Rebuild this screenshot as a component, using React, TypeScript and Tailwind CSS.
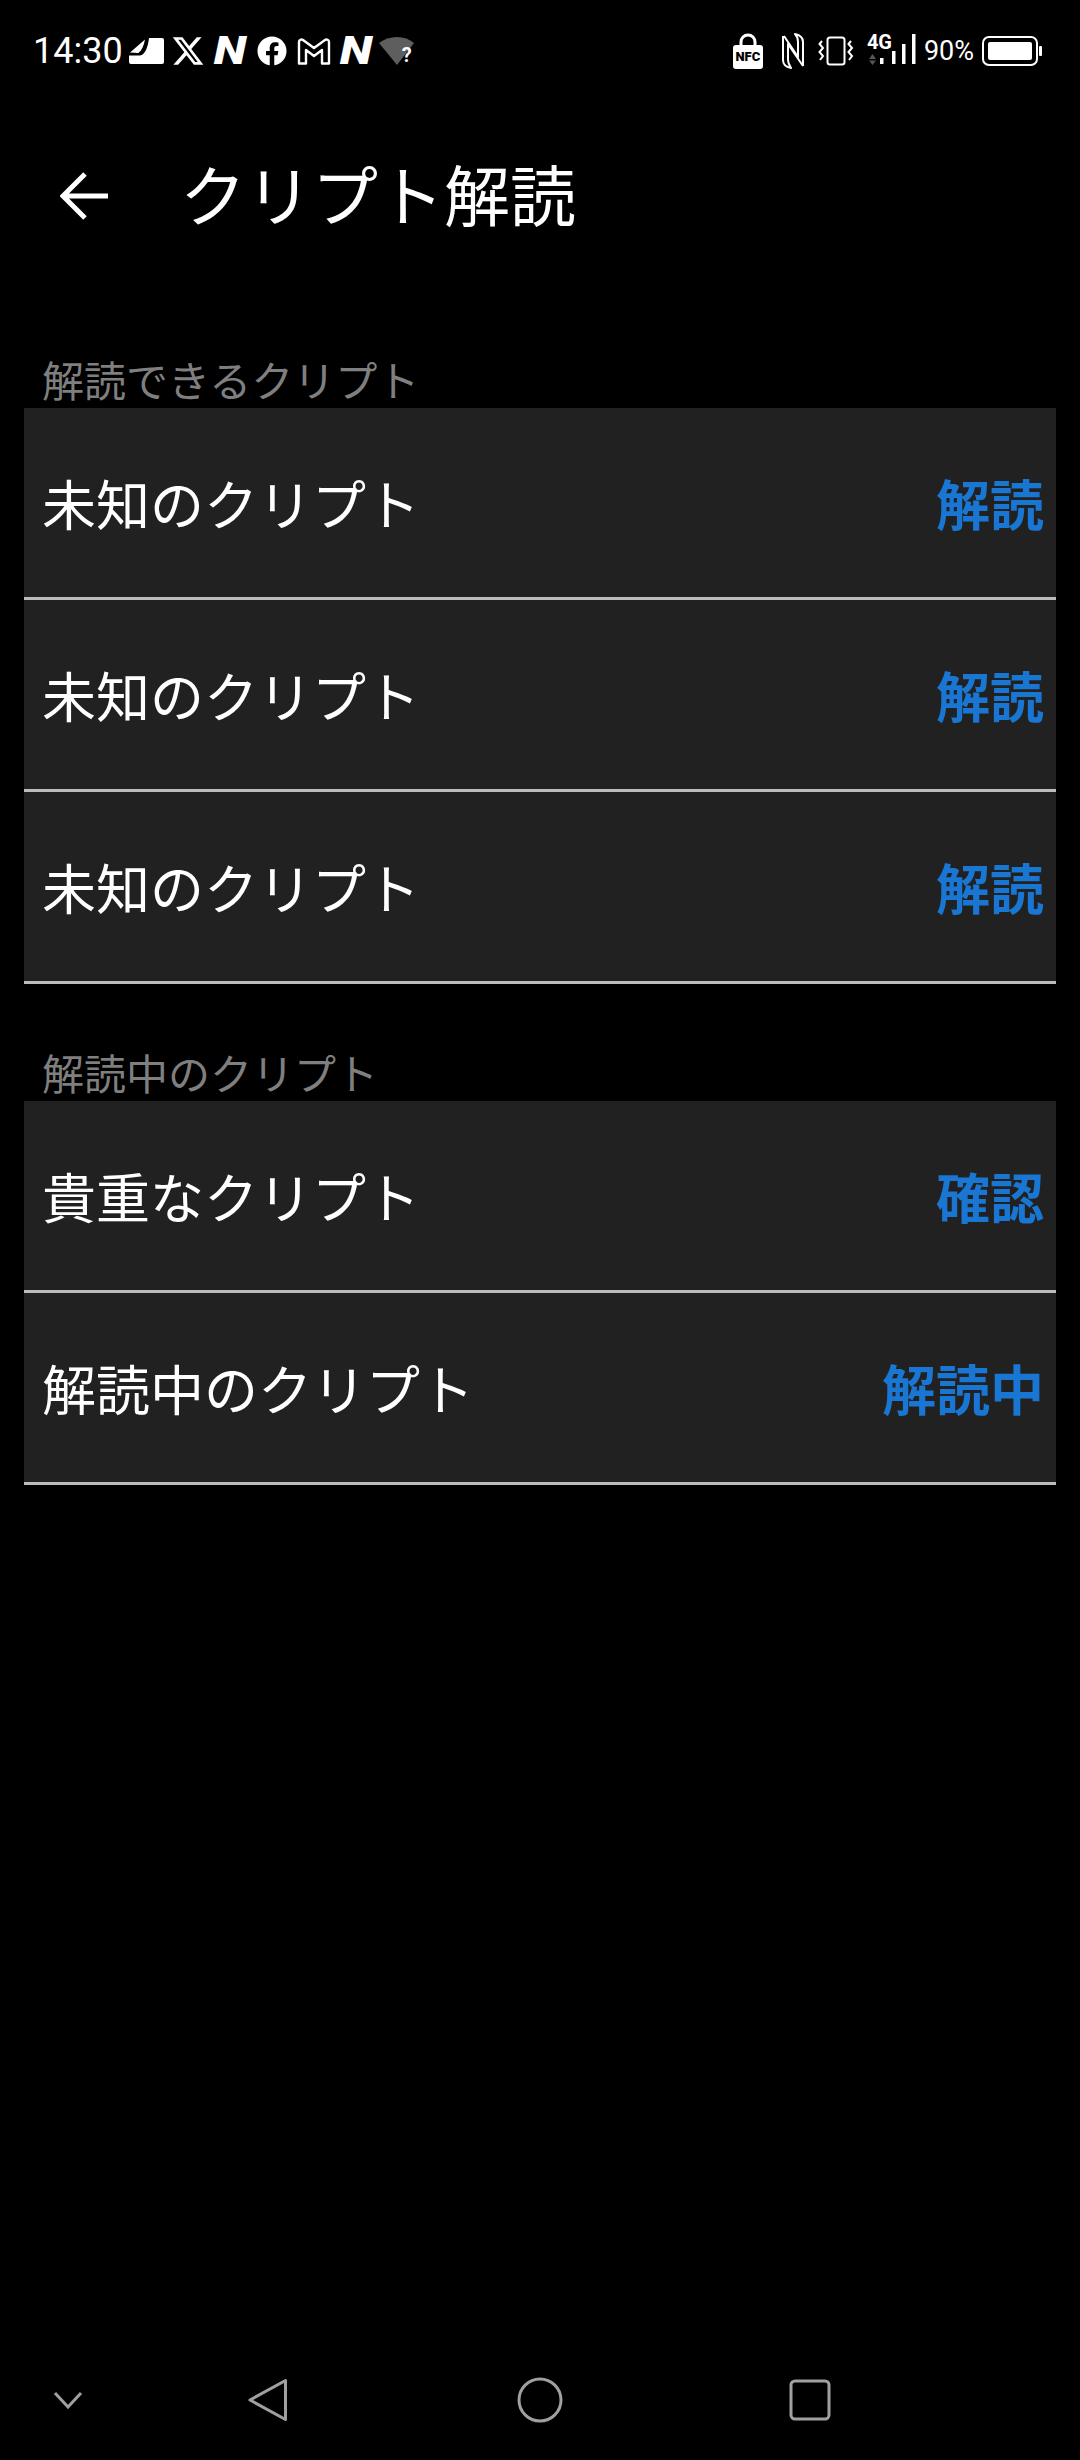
import type { ReactNode } from 'react'
import { FaFacebook } from 'react-icons/fa'
import { FaXTwitter } from 'react-icons/fa6'

const cjk = "font-['Noto_Sans_CJK_JP',sans-serif]"

function LeftIcons() {
  return (
    <div className="flex items-center">
      {/* note */}
      <svg width="35" height="26" viewBox="0 0 35 26" className="ml-[6px]">
        <path d="M20 0H33a2 2 0 0 1 2 2V24a2 2 0 0 1-2 2H2a2 2 0 0 1-2-2V17.500H11C16 17 19 9 20 0Z" fill="#fff" />
        <path d="M1 14.500L16 1.500C15 7 13 12 9.500 15Z" fill="#fff" />
      </svg>
      {/* X */}
      <FaXTwitter className="ml-[7px] text-[34px] text-white" />
      <span className="ml-[9px] w-[32px] scale-x-125 text-center font-['Roboto',sans-serif] text-[38px] leading-none font-black text-white italic">N</span>
      <FaFacebook className="ml-[11px] text-[30px] text-white" />
      {/* gmail */}
      <svg width="34" height="27" viewBox="0 0 34 27" className="ml-[10px]">
        <path d="M2 4a2.500 2.500 0 0 1 4-2L17 10 28 2a2.500 2.500 0 0 1 4 2V25.500H25V12L17 18 9 12V25.500H2Z" fill="none" stroke="#fff" strokeWidth="2.400" strokeLinejoin="round" />
      </svg>
      <span className="ml-[9px] w-[32px] scale-x-125 text-center font-['Roboto',sans-serif] text-[38px] leading-none font-black text-white italic">N</span>
      {/* wifi no internet */}
      <div className="relative ml-[7px] h-[28px] w-[36px]">
        <svg width="36" height="28" viewBox="0 0 36 28">
          <path d="M0 6C10 -2 26 -2 35 6L18 28Z" fill="#5e5e5e" />
        </svg>
        <span className="absolute top-[8px] left-[23px] font-['Roboto',sans-serif] text-[20px] leading-[20px] font-bold text-white">?</span>
      </div>
    </div>
  )
}

function RightIcons() {
  return (
    <div className="flex items-center">
      {/* nfc lock */}
      <div className="relative h-[36px] w-[30px]">
        <svg width="30" height="36" viewBox="0 0 30 36">
          <path d="M8 14V9a7 7 0 0 1 14 0V14" fill="none" stroke="#fff" strokeWidth="3" />
          <rect x="0" y="12" width="30" height="24" rx="3" fill="#fff" />
        </svg>
        <span className="absolute top-[16px] left-0 w-[30px] text-center font-['Roboto',sans-serif] text-[13px] leading-[16px] font-black text-black">NFC</span>
      </div>
      {/* n-mark */}
      <svg width="24" height="36" viewBox="0 0 24 36" className="ml-[18px]">
        <path d="M2 3V27C2 31 5 34 10 35C8 32 7 30 7 27V11L22 33" fill="none" stroke="#fff" strokeWidth="2" strokeLinejoin="round" />
        <path d="M22 33V9C22 5 19 2 14 1C16 3 17 6 17 9V24L3 3" fill="none" stroke="#fff" strokeWidth="2" strokeLinejoin="round" />
      </svg>
      {/* vibrate */}
      <svg width="36" height="30" viewBox="0 0 36 30" className="ml-[13px]">
        <rect x="9.500" y="1.500" width="17" height="27" rx="2.500" fill="none" stroke="#fff" strokeWidth="2" />
        <path d="M4 5L1.500 8 5 12 1.500 16 5 20 2 24" fill="none" stroke="#fff" strokeWidth="2" />
        <path d="M33 5L30.500 8 34 12 30.500 16 34 20 31 24" fill="none" stroke="#fff" strokeWidth="2" />
      </svg>
      {/* 4G + signal */}
      <div className="relative ml-[12px] h-[34px] w-[50px]">
        <span className="absolute top-[-2px] left-[1px] font-['Roboto',sans-serif] text-[20px] leading-[20px] font-bold text-white">4G</span>
        <svg width="50" height="34" viewBox="0 0 50 34" className="absolute top-0 left-0">
          <path d="M6.500 20L10 25H3ZM3 26.500H10L6.500 31Z" fill="#555" />
          <rect x="14" y="24" width="3.500" height="6" fill="#fff" />
          <rect x="26" y="17" width="3.500" height="13" fill="#fff" />
          <rect x="36" y="10" width="3.500" height="20" fill="#fff" />
          <rect x="46" y="0" width="3.500" height="30" fill="#fff" />
        </svg>
      </div>
      <span className="ml-[8px] font-['Roboto',sans-serif] text-[27px] leading-none text-white">90%</span>
      {/* battery */}
      <svg width="60" height="30" viewBox="0 0 60 30" className="ml-[8px]">
        <rect x="1" y="1" width="54" height="28" rx="6" fill="none" stroke="#fff" strokeWidth="2" />
        <rect x="6" y="6" width="44" height="18" rx="2" fill="#fff" />
        <rect x="57" y="10" width="3" height="10" rx="1" fill="#fff" />
      </svg>
    </div>
  )
}

function Row({ name, action }: { name: string; action: string }) {
  return (
    <div className="flex h-[192px] items-center justify-between border-b-[3px] border-[#bdbdbd] bg-[#212121] pr-[12px] pl-[18px]">
      <span className="text-[54px] leading-none text-white">{name}</span>
      <span className="text-[54px] leading-none font-bold text-[#1976d2]">{action}</span>
    </div>
  )
}

function Section({ title, children }: { title: string; children: ReactNode }) {
  return (
    <section>
      <div className="h-[54px] pl-[42px] text-[42px] leading-[50px] text-[#7f7f7f]">{title}</div>
      <div className="mx-[24px]">{children}</div>
    </section>
  )
}

export default function App() {
  return (
    <div className={`flex h-[2460px] w-[1080px] flex-col overflow-hidden bg-black ${cjk}`}>
      <div className="flex h-[102px] items-center justify-between pr-[38px] pl-[33px]">
        <div className="flex items-center">
          <span className="font-['Roboto',sans-serif] text-[36px] leading-none text-white">14:30</span>
          <LeftIcons />
        </div>
        <RightIcons />
      </div>

      <header className="mt-[49px] flex h-[90px] items-center pl-[60px]">
        <svg width="50" height="48" viewBox="0 0 50 48">
          <path d="M48 24H3M25 2L3 24 25 46" fill="none" stroke="#fff" strokeWidth="5" />
        </svg>
        <h1 className="mb-[8px] ml-[70px] text-[66px] leading-none font-normal text-white">クリプト解読</h1>
      </header>

      <div className="mt-[113px]">
        <Section title="解読できるクリプト">
          <Row name="未知のクリプト" action="解読" />
          <Row name="未知のクリプト" action="解読" />
          <Row name="未知のクリプト" action="解読" />
        </Section>
      </div>

      <div className="mt-[63px]">
        <Section title="解読中のクリプト">
          <Row name="貴重なクリプト" action="確認" />
          <Row name="解読中のクリプト" action="解読中" />
        </Section>
      </div>

      <nav className="mt-auto mb-[35px] flex h-[50px] items-center">
        <svg width="30" height="18" viewBox="0 0 30 18" className="ml-[53px]">
          <path d="M2 2L15 16 28 2" fill="none" stroke="#a0a0a0" strokeWidth="3" />
        </svg>
        <svg width="42" height="46" viewBox="0 0 42 46" className="ml-[164px]">
          <path d="M38.500 3.500V42.500L3 23Z" fill="none" stroke="#a0a0a0" strokeWidth="3" strokeLinejoin="round" />
        </svg>
        <svg width="46" height="46" viewBox="0 0 46 46" className="ml-[228px]">
          <circle cx="23" cy="23" r="21" fill="none" stroke="#a0a0a0" strokeWidth="3" />
        </svg>
        <svg width="42" height="42" viewBox="0 0 42 42" className="ml-[226px]">
          <rect x="2" y="2" width="38" height="38" rx="4" fill="none" stroke="#a0a0a0" strokeWidth="3" />
        </svg>
      </nav>
    </div>
  )
}
